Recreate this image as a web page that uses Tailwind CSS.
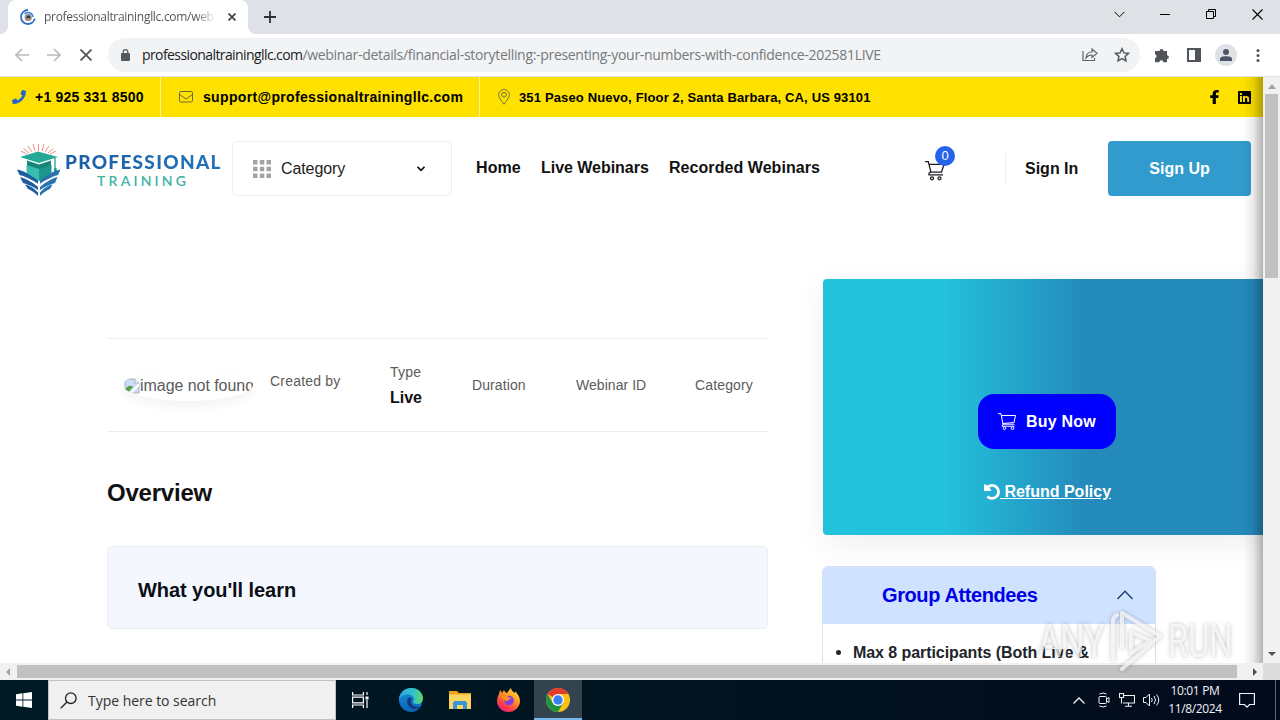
<!DOCTYPE html>
<html lang="en">
<head>
<meta charset="utf-8">
<title>Professional Training</title>
<script src="https://cdn.jsdelivr.net/npm/@tailwindcss/browser@4"></script>
</head>
<body class="w-[1280px] h-[720px] overflow-hidden bg-white flex flex-col whitespace-nowrap font-['Liberation_Sans',Arial,sans-serif] text-[#111]">

<!-- Tab strip -->
<div class="h-[34px] shrink-0 bg-[#dee1e6] flex items-stretch font-['Open_Sans',sans-serif]">
  <div class="w-2 bg-white"><div class="h-full bg-[#dee1e6] rounded-br-lg"></div></div>
  <div class="w-[240px] bg-white rounded-t-lg flex items-center pl-3">
    <svg class="w-4 h-4 shrink-0" viewBox="0 0 16 16" fill="none"><path d="M8 1a7 7 0 1 0 6.8 8.6" stroke="#2f6fc9" stroke-width="1.8"/><path d="M4.500 5A5 5 0 0 1 13 8" stroke="#3f7fd0" stroke-width="1.5"/><circle cx="8.2" cy="8.4" r="3.6" fill="#8195a5"/><circle cx="8.4" cy="8.2" r="1.8" fill="#3b3330"/><path d="M5 10l3 2 3-2-2-1z" fill="#c48a62"/></svg>
    <div class="ml-2 w-[172px] overflow-hidden text-[12px] leading-4 tracking-[-0.3px] bg-linear-to-r from-[#4c5053] from-88% to-transparent bg-clip-text text-transparent">professionaltrainingllc.com/web</div>
    <svg class="w-2 h-2 ml-3 shrink-0" viewBox="0 0 8 8" stroke="#3c4043" stroke-width="1.6"><path d="M.5.5l7 7M7.500.5l-7 7"/></svg>
  </div>
  <div class="w-2 bg-white"><div class="h-full bg-[#dee1e6] rounded-bl-lg"></div></div>
  <svg class="w-3 h-3 ml-2 mt-[11px]" viewBox="0 0 12 12" stroke="#2d3034" stroke-width="1.8"><path d="M6 0v12M0 6h12"/></svg>
  <div class="ml-auto flex items-center pb-[6px] pr-[17px] text-black">
    <svg class="w-[11px] h-[7px] mr-[35px]" viewBox="0 0 11 7" fill="none" stroke="currentColor"><path d="M.5.8l5 5 5-5"/></svg>
    <svg class="w-[10px] h-[10px] mr-[36px]" viewBox="0 0 10 10" stroke="currentColor"><path d="M0 5.500h10"/></svg>
    <svg class="w-[10px] h-[10px] mr-[36px]" viewBox="0 0 10 10" fill="none" stroke="currentColor"><path d="M.5 2.500h7v7h-7zM2.500 2.500v-2h7v7h-2"/></svg>
    <svg class="w-[11px] h-[11px]" viewBox="0 0 11 11" stroke="currentColor" stroke-width="1.100"><path d="M.5.5l10 10M10.500.5l-10 10"/></svg>
  </div>
</div>

<!-- Toolbar -->
<div class="h-[43px] shrink-0 bg-white border-b border-[#dfe3e6] flex items-center font-['Open_Sans',sans-serif]">
  <svg class="w-[14px] h-[14px] ml-[15px]" viewBox="0 0 14 14" fill="none" stroke="#b8babd" stroke-width="1.700"><path d="M14 7H1M7 1L1 7l6 6"/></svg>
  <svg class="w-[14px] h-[14px] ml-[18px]" viewBox="0 0 14 14" fill="none" stroke="#b8babd" stroke-width="1.700"><path d="M0 7h13M7 1l6 6-6 6"/></svg>
  <svg class="w-3 h-3 ml-[19px]" viewBox="0 0 12 12" stroke="#505357" stroke-width="1.800"><path d="M.5.5l11 11M11.500.5l-11 11"/></svg>
  <div class="ml-4 w-[1032px] h-[34px] rounded-full bg-[#f1f3f4] flex items-center pl-[13px] pr-[10px]">
    <svg class="w-[9px] h-3 shrink-0" viewBox="0 0 9 12"><rect y="4" width="9" height="8" rx="1" fill="#55595e"/><path d="M2.200 5V3a2.300 2.300 0 0 1 4.600 0v2" fill="none" stroke="#55595e" stroke-width="1.200"/></svg>
    <div class="ml-[12px] text-[14px] leading-5 tracking-[-0.310px] text-[#74797e]"><span class="text-[#202124] tracking-[-0.590px]">professionaltrainingllc.com</span>/webinar-details/financial-storytelling:-presenting-your-numbers-with-confidence-202581LIVE</div>
    <svg class="w-4 h-4 ml-auto shrink-0" viewBox="0 0 16 16" fill="none" stroke="#5f6368" stroke-width="1.200"><path d="M1 4v9.500h11.500V11M4 11c.3-4 2.300-6 6-6V2l5 4.300-5 4.200V8C7.500 8 5.500 9 4 11z"/></svg>
    <svg class="w-4 h-4 ml-4 shrink-0" viewBox="0 0 16 16" fill="none" stroke="#55595e" stroke-width="1.500"><path d="M8 1.800l1.900 4.100 4.500.5-3.300 3 .9 4.500L8 11.700l-4 2.200.9-4.500-3.300-3 4.500-.5z"/></svg>
  </div>
  <svg class="w-4 h-4 ml-[14px]" viewBox="0 0 16 16" fill="#505357"><path d="M1 4h4.500a2 2 0 1 1 4 0H13v4.200a1.900 1.900 0 1 1 0 3.800v3.200H9.300a2 2 0 0 0-4 0H1v-4a2 2 0 0 0 0-3.900z"/></svg>
  <svg class="w-[14px] h-[14px] ml-[17px]" viewBox="0 0 14 14" fill="#505357"><path d="M0 0h14v14H0zM2 2v10h6V2z" fill-rule="evenodd"/></svg>
  <div class="ml-[14px] w-[22px] h-[22px] rounded-full bg-[#dee1e6] flex items-center justify-center"><svg class="w-3 h-3" viewBox="0 0 12 12" fill="#4e5468"><circle cx="6" cy="3" r="3"/><path d="M0 12V9.800C0 8 3 7.300 6 7.300s6 .7 6 2.500V12z"/></svg></div>
  <svg class="w-1 h-[13px] ml-[19px]" viewBox="0 0 4 13" fill="#505357"><circle cx="2" cy="1.600" r="1.500"/><circle cx="2" cy="6.500" r="1.500"/><circle cx="2" cy="11.400" r="1.500"/></svg>
</div>

<!-- Viewport -->
<div class="h-[586px] shrink-0 flex">
  <main class="relative w-[1263px] h-full overflow-hidden bg-white">
    <!-- Contact bar -->
    <div class="h-10 bg-[#ffe100] flex items-stretch font-bold text-black">
      <div class="w-[161px] border-r border-[#fff0a0] flex items-center pl-3">
        <svg class="w-[14px] h-[14px]" viewBox="0 0 512 512" fill="#2563cf"><path d="M493 25L389 1c-11-3-23 3-27 14l-48 112c-4 10-1 21 7 28l61 50a370 370 0 0 1-177 177l-50-61c-7-8-18-11-28-7L15 362c-11 5-17 16-14 27l24 104c2 11 12 19 23 19 256 0 464-207 464-464 0-11-8-21-19-23z"/></svg>
        <span class="ml-[9px] text-[14px] tracking-[0.210px]">+1 925 331 8500</span>
      </div>
      <div class="w-[319px] border-r border-[#fff0a0] flex items-center pl-[18px]">
        <svg class="w-[14px] h-3" viewBox="0 0 14 12" fill="none" stroke="#6c6a38"><rect x=".5" y=".5" width="13" height="10.500" rx="1.300"/><path d="M.5 3.500L7 8l6.500-4.500"/></svg>
        <span class="ml-[10px] text-[14px] tracking-[0.335px]">support@professionaltrainingllc.com</span>
      </div>
      <div class="flex items-center pl-[18px]">
        <svg class="w-3 h-4" viewBox="0 0 12 16" fill="none" stroke="#75743d"><path d="M6 15.300C3 11 .6 8.300.6 5.900a5.400 5.400 0 0 1 10.800 0c0 2.400-2.400 5.100-5.400 9.400z"/><circle cx="6" cy="5.800" r="2.400"/></svg>
        <span class="ml-[9px] pt-px text-[13px] tracking-[0.145px]">351 Paseo Nuevo, Floor 2, Santa Barbara, CA, US 93101</span>
      </div>
      <div class="ml-auto flex items-center pr-3">
        <svg class="w-[9px] h-[14px]" viewBox="0 0 8 14" preserveAspectRatio="none"><path d="M2.400 14V7.900H.2V5.300h2.200V3.500C2.400 1.200 3.700 0 5.800 0c1 0 2 .2 2 .2v2.200H6.700c-1.100 0-1.500.7-1.500 1.400v1.500h2.500l-.4 2.600H5.200V14z"/></svg>
        <svg class="w-[13px] h-[13px] ml-[19px]" viewBox="0 0 13 13"><rect width="13" height="13" rx="1"/><path d="M2 5h1.900v6H2zM2 2h1.900v1.900H2zM5 5h1.800v.8C7.700 4.400 11.100 4.500 11.100 7.500V11H9.200V7.900c0-1.700-2.300-1.600-2.300 0V11H5z" fill="#ffe100"/></svg>
      </div>
    </div>

    <!-- Site header -->
    <header class="h-[162px] flex items-start pt-6">
      <div class="ml-4 flex h-[55px]">
        <svg class="w-[46px] h-[55px]" viewBox="0 0 46 55">
          <g stroke="#eb8176" stroke-width=".9"><path d="M22.500 10V3M19 10l-2-7M26 10l2-7M16 11l-4-6M29 11l4-6M13 12L7.500 7.500M32 12l5.500-4.500M11 13l-6-3M34 13l6-3"/></g>
          <path d="M4 16L22 10.500 42 16l-19 6z" fill="#25a997"/><path d="M11 19.500L23 23.500l12-4v7l-12 4-12-4z" fill="#168579"/>
          <path d="M10.500 24l12.500 4v12l-12.500-5z" fill="#38beae"/><path d="M35.500 24L23 28v12l12.500-5z" fill="#1c978b"/>
          <path d="M39 17v12" stroke="#229e90" stroke-width="1.300"/><path d="M38 27h2.500l.5 5h-3z" fill="#229e90"/>
          <g fill="#1d5ca0"><path d="M1 28.500c6 1 13 5 21 11v3.200C15 38 8 35 3.500 34z"/><path d="M4 36c7 2 12 5 18 10v3C16 45 11 43 7 42z"/><path d="M9 43.500c6 1.500 9 4 13 8V55c-4-4-7-6-10-7z"/></g>
          <g fill="#2872ae"><path d="M44.500 28.500c-6 1-13 5-20.500 11v3.200C31 38 38 35 42 34z"/><path d="M41.500 36c-7 2-11.500 5-17.500 10v3c6-4 11-6 15-7z"/><path d="M36.500 43.500c-6 1.500-8.500 4-12.500 8V55c4-4 7-6 10-7z"/></g>
        </svg>
        <div class="w-[170px] pt-[11px] font-['Lato',sans-serif]">
          <div class="ml-[3px] text-[19px] leading-5 font-black tracking-[1.300px] bg-linear-to-r from-[#1a5da8] to-[#2476b8] bg-clip-text text-transparent">PROFESSIONAL</div>
          <div class="ml-[35px] text-[14px] leading-[18px] font-semibold tracking-[3.200px] text-[#3fb2a6]">TRAINING</div>
        </div>
      </div>
      <div class="w-[220px] h-[55px] border border-[#eeeeee] rounded-[5px] flex items-center pl-5">
        <svg class="w-[18px] h-[18px]" viewBox="0 0 18 18" fill="#a3a3a3"><path d="M0 0h4.500v4.500H0zM6.800 0h4.500v4.500H6.800zM13.500 0H18v4.500h-4.500zM0 6.800h4.500v4.500H0zM6.800 6.800h4.500v4.500H6.800zM13.500 6.800H18v4.500h-4.500zM0 13.500h4.500V18H0zM6.800 13.500h4.500V18H6.800zM13.500 13.500H18V18h-4.500z"/></svg>
        <span class="ml-[10px] w-[136px] text-[16px] tracking-[-0.100px] text-[#222]">Category</span>
        <svg class="w-2 h-[6px]" viewBox="0 0 8 6" fill="none" stroke="#111" stroke-width="1.600"><path d="M.5.8L4 4.300 7.500.8"/></svg>
      </div>
      <nav class="ml-6 h-[53px] flex items-center text-[16px] font-bold">
        <span class="w-[65px] tracking-[0.100px]">Home</span><span class="w-[128px] tracking-[-0.030px]">Live Webinars</span><span class="tracking-[0.060px]">Recorded Webinars</span>
      </nav>
      <div class="ml-auto flex items-center h-[55px] mr-3">
        <div class="relative w-5 h-5 mr-[60px] top-[2px]">
          <svg class="w-5 h-5" viewBox="0 0 20 20" fill="none" stroke="#1b1b24" stroke-width="1.300"><path d="M0 .7h3.300L6 11.300M4 3.300h15l-2.500 7.900H6Q3.500 11.200 4 13.800h14"/><circle cx="7" cy="17.300" r="1.500"/><circle cx="14.500" cy="17.300" r="1.500"/></svg>
          <span class="absolute left-[10px] -top-[15px] w-5 h-5 rounded-full bg-[#2563eb] text-white text-[13px] leading-5 text-center">0</span>
        </div>
        <div class="w-px h-8 bg-[#eeeeee]"></div>
        <span class="ml-[19px] w-[83px] text-[16px] font-bold">Sign In</span>
        <div class="w-[143px] h-[55px] rounded-[4px] bg-[#319bce] text-white text-[16px] font-bold flex items-center justify-center">Sign Up</div>
      </div>
    </header>

    <!-- Content -->
    <div class="flex pl-[107px]">
      <section class="w-[661px] pt-[59px]">
        <div class="h-[94px] border-y border-[#eeeeee] flex items-start text-[14px] leading-5 text-[#5b5b5b]">
          <div class="ml-4 mt-[30px] w-[130px] h-[32px] rounded-[50%] overflow-hidden shadow-[0_5px_12px_rgba(0,0,0,0.05)] flex items-center pt-[2px] pl-[1px] text-[16px] tracking-[-0.050px]">
            <svg class="w-4 h-4 shrink-0" viewBox="0 0 16 16"><path d="M1 1h10l4 4v10H1z" fill="#c8ddf8" stroke="#a9b2ba"/><path d="M1.500 14.500V11C4 7 7 7 9 9l-5 5.500z" fill="#55a342"/><path d="M5 15L15 5v3l-7 7z" fill="#fff"/><path d="M11 1v4h4" fill="#fff" stroke="#a9b2ba"/></svg>image not found
          </div>
          <span class="ml-[17px] mt-[32px] w-[120px] tracking-[0.200px]">Created by</span>
          <div class="w-[82px] mt-[23px]"><div class="tracking-[0.200px]">Type</div><div class="mt-[6px] text-[16px] font-bold text-[#111]">Live</div></div>
          <span class="mt-[36px] w-[104px] tracking-[0.100px]">Duration</span>
          <span class="mt-[36px] w-[119px] tracking-[0.050px]">Webinar ID</span>
          <span class="mt-[36px] tracking-[0.150px]">Category</span>
        </div>
        <h2 class="mt-[46px] text-[24px] leading-[30px] font-bold tracking-[-0.220px]">Overview</h2>
        <div class="mt-[38px] h-[83px] rounded-[5px] border border-[#ebeef7] bg-[#f4f7fe] flex items-center pl-[30px] pt-[4px] text-[20px] font-bold tracking-[-0.070px] text-[#0b0f18]">What you'll learn</div>
      </section>
      <aside class="ml-[55px] w-[440px] shrink-0">
        <div class="h-[256px] rounded-l-[4px] shadow-[0_8px_32px_rgba(0,0,0,0.07)] bg-[linear-gradient(90deg,#23c2dc_0%,#23c2dc_27%,#248abb_60%,#248abb_100%)] flex flex-col items-center pt-[115px] pl-2 text-white text-[16px] font-bold">
          <div class="w-[138px] h-[55px] rounded-[16px] bg-[#0000ff] flex items-center pl-5">
            <svg class="w-[18px] h-[17px]" viewBox="0 0 18 17" fill="none" stroke="#fff"><path d="M0 .7h3l2 10.500h11.500M3.500 2.500h14L16 9.500l-11 1M5 11.200l-1 2h12.500"/><circle cx="6.500" cy="15.200" r="1.300"/><circle cx="14.500" cy="15.200" r="1.300"/></svg>
            <span class="ml-[10px] tracking-[0.200px]">Buy Now</span>
          </div>
          <div class="mt-[31px] h-6 flex items-center pl-px">
            <svg class="w-4 h-4" viewBox="0 0 16 16" fill="none"><path d="M2.500 4.500A6.500 6.500 0 1 1 3.400 12.500" stroke="#fff" stroke-width="2.800"/><path d="M0 .5h2l5 5v1.500H0z" fill="#fff"/></svg>
            <span class="underline whitespace-pre"> Refund Policy</span>
          </div>
        </div>
        <div class="-ml-px mt-[31px] w-[334px] rounded-t-[6px] border border-[#d5e0f0] bg-white">
          <div class="h-[57px] rounded-t-[5px] bg-[#cfe2ff] flex items-center pb-[2px] pl-[59px] text-[20px] font-bold text-[#0000e6]">
            <span class="w-[235px] tracking-[-0.400px]">Group Attendees</span>
            <svg class="w-4 h-[10px]" viewBox="0 0 16 10" fill="none" stroke="#173a70" stroke-width="1.300"><path d="M.5 9L8 1.200 15.500 9"/></svg>
          </div>
          <div class="h-[80px] flex items-start pt-[19px] pl-[13px] text-[16px] leading-5 font-bold text-[#212529]">
            <span class="mt-[7px] w-[5px] h-[5px] rounded-full bg-[#212529] mr-[12px]"></span><span class="tracking-[-0.070px]">Max 8 participants (Both Live &amp;</span>
          </div>
        </div>
      </aside>
    </div>
    <div class="absolute right-0 top-0 w-5 h-full bg-linear-to-r from-transparent via-black/8 to-black/30"></div>
  </main>
  <div class="w-[17px] h-full bg-[#f1f1f1] flex flex-col items-center">
    <svg class="w-2 h-[5px] mt-[7px]" viewBox="0 0 8 5" fill="#a3a3a3"><path d="M0 5l4-5 4 5z"/></svg>
    <div class="w-[13px] h-[184px] mt-[5px] bg-[#c1c1c1]"></div>
    <svg class="w-2 h-1 mt-auto mb-[7px]" viewBox="0 0 8 4" fill="#505050"><path d="M0 0h8L4 4z"/></svg>
  </div>
</div>

<!-- Horizontal scrollbar -->
<div class="h-[17px] shrink-0 bg-[#f1f1f1] flex items-center">
  <svg class="w-1 h-2 ml-[6px]" viewBox="0 0 4 8" fill="#a3a3a3"><path d="M4 0v8L0 4z"/></svg>
  <div class="ml-[7px] w-[1220px] h-[13px] bg-[#c1c1c1]"></div>
  <svg class="w-1 h-2 ml-[16px]" viewBox="0 0 4 8" fill="#505050"><path d="M0 0v8l4-4z"/></svg>
  <div class="ml-auto w-[17px] h-full bg-[#dcdcdc]"></div>
</div>

<!-- Taskbar -->
<div class="h-10 shrink-0 bg-linear-to-r from-[#001a24] via-[#001420] to-[#020a1c] flex items-stretch font-['Open_Sans',sans-serif]">
  <div class="w-12 flex items-center justify-center"><svg class="w-4 h-4" viewBox="0 0 16 16" fill="#fff"><path d="M0 2.200l6.500-.9v6.300H0zM7.300 1.200L16 0v7.600H7.300zM0 8.400h6.500v6.300L0 13.800zM7.300 8.400H16V16l-8.700-1.200z"/></svg></div>
  <div class="w-[288px] bg-[#f0f0f0] border border-[#c3c3c3] flex items-center pl-[11px]">
    <svg class="w-[17px] h-[17px]" viewBox="0 0 17 17" fill="none" stroke="#222" stroke-width="1.300"><circle cx="10.800" cy="6.200" r="5.300"/><path d="M7 10L.7 16.300"/></svg>
    <span class="ml-[11px] text-[14px] tracking-[-0.030px] text-[#333]">Type here to search</span>
  </div>
  <div class="w-12 flex items-center justify-center"><svg class="w-[17px] h-4" viewBox="0 0 17 16" fill="none" stroke="#fff" stroke-width="1.200"><path d="M.6 0v3h10.800V0M.6 16v-3h10.800v3M.6 5.100h10.800v5.800H.6zM15 0v3M15 8v8"/><path d="M13.500 4.500h3v3h-3z" fill="#fff" stroke="none"/></svg></div>
  <div class="w-[54px] flex items-center justify-center"><svg class="w-6 h-6" viewBox="0 0 24 24">
    <defs><linearGradient id="e1" x1="0" x2="1"><stop stop-color="#2aa5e6"/><stop offset=".6" stop-color="#34c4c8"/><stop offset="1" stop-color="#62d660"/></linearGradient><linearGradient id="e2" x1="0" y1="0" x2="0" y2="1"><stop stop-color="#1c8fdc"/><stop offset="1" stop-color="#0c62b5"/></linearGradient></defs>
    <path d="M24 10C23 3 18 0 12 0A12 12 0 1 0 22 18.600z" fill="url(#e2)"/><path d="M0 12C0 5 5.500 0 12 0s12 4.800 12 10.500c0 3.500-2.800 5.500-6 5.500-2.500 0-4-1-4-2s1-1.500 1-3c0-2.500-2.500-4.500-6-4.500S1 8.500 0 12z" fill="url(#e1)"/><path d="M9 10c-2.500 4.500 1 11 7 11 2.500 0 4.500-.8 6-2 .5-.4.200-.9-.4-.7-5.600 2-9.600-1-9.600-4.800 0-1 .5-2 1-2.500-1-1.500-3-2-4-1z" fill="#103d7c"/></svg></div>
  <div class="w-11 flex items-center justify-center"><svg class="w-[22px] h-[18px]" viewBox="0 0 22 18"><path d="M0 0h8l2 2h12v4H0z" fill="#e8a317"/><path d="M0 3.500h22V18H0z" fill="#fcd462"/><path d="M4 18v-6.500L5.500 10h11l1.500 1.500V18h-4v-4H8v4z" fill="#3993d4"/></svg></div>
  <div class="w-[52px] pl-px flex items-center justify-center"><svg class="w-[23px] h-6" viewBox="0 0 23 24">
    <defs><linearGradient id="f" x1=".8" y1="0" x2=".2" y2="1"><stop stop-color="#ffe43a"/><stop offset=".4" stop-color="#ff9420"/><stop offset=".75" stop-color="#ff3b4b"/><stop offset="1" stop-color="#e5178e"/></linearGradient></defs>
    <path d="M2 6l1-4c1 1 1.500 2 2 3l2-3c.5 1.500 1.500 2.500 3 3 1-1 2-3 4-5 .3 2.500 2 3.500 3.500 5l1-1.500C21 6.500 23 9 23 13c0 6-5 11-11.500 11S0 19 0 13c0-3 1-5 2-7z" fill="url(#f)"/><circle cx="12" cy="12.500" r="4.800" fill="#7c3fe0"/><path d="M4 8c3-2 6-1 7 1l3 .8c-.5 2-3 1.700-3.500 3.200-1 .5-2.500 0-3.500-1z" fill="#ff8b24"/></svg></div>
  <div class="w-12 bg-[#33444e] border-b-2 border-[#76b9ed] flex items-center justify-center"><svg class="w-6 h-6 mt-[2px]" viewBox="0 0 24 24"><circle cx="12" cy="12" r="12" fill="#fbc116"/><path d="M12 12L1.600 6A12 12 0 0 1 22.400 6H12z" fill="#e33b2e"/><path d="M1.600 6A12 12 0 0 0 12 24l5.200-9H6.800z" fill="#229342"/><circle cx="12" cy="12" r="6" fill="#fff"/><circle cx="12" cy="12" r="4.700" fill="#3a7ff0"/></svg></div>
  <div class="ml-auto flex items-center text-[#f0f2f5]">
    <svg class="w-3 h-[7px]" viewBox="0 0 12 7" fill="none" stroke="currentColor" stroke-width="1.300"><path d="M.5 6.500L6 1l5.500 5.500"/></svg>
    <svg class="w-3 h-4 ml-[13px]" viewBox="0 0 12 16" fill="none" stroke="currentColor"><rect x="1" y="4.500" width="7.500" height="7" rx="1"/><path d="M8.500 7L11 5.500v5L8.500 9M1.500 2Q5 0 8.500 2M1.500 14Q5 16 8.500 14"/></svg>
    <svg class="w-4 h-[14px] ml-[9px]" viewBox="0 0 16 14" fill="none" stroke="currentColor" stroke-width="1.100"><path d="M5 2.500h10.500v7.500H4M9.500 10v3M6 13.200h7M.5.5h4v4h-4zM2.500 4.500v6"/></svg>
    <svg class="w-[17px] h-[14px] ml-2" viewBox="0 0 17 14" fill="none" stroke="currentColor"><path d="M.5 4.500H3l3.500-3.500v12L3 9.500H.5zM8.500 5q1.500 2 0 4M11 3q3 4 0 8M13.500 1.500q4.500 5.500 0 11"/></svg>
    <div class="w-[70px] text-center text-[12px] leading-[18px] tracking-[-0.350px]"><div>10:01 PM</div><div>11/8/2024</div></div>
    <svg class="w-4 h-4 ml-[9px] mr-[20px]" viewBox="0 0 16 16" fill="none" stroke="currentColor" stroke-width="1.200"><path d="M.6 1.500h14.800v11H10.500L8 15.200 5.500 12.500H.6z"/></svg>
    <div class="w-px h-full bg-[#5a6570] mr-1"></div>
  </div>
</div>

<!-- Watermark -->
<div class="absolute left-[1038px] top-[608px] flex items-center h-[66px] w-[196px] text-white/70 text-[46px] leading-none font-['Roboto',sans-serif] drop-shadow-[0_0_2px_rgba(0,0,0,0.35)]">
  <span class="w-[70px]"><span class="inline-block origin-left scale-x-[0.76] tracking-[-1px]">ANY</span></span>
  <svg class="w-[56px] h-[64px] shrink-0" viewBox="0 0 56 64" fill="none" stroke="currentColor" stroke-width="4" stroke-linejoin="round" stroke-linecap="round"><path d="M5 50V12q0-4 4-6M14 38V4l38 23-38 33M23 44V23l20 9z"/></svg>
  <span class="w-[65px] ml-1"><span class="inline-block origin-left scale-x-[0.71]">RUN</span></span>
</div>
</body>
</html>
